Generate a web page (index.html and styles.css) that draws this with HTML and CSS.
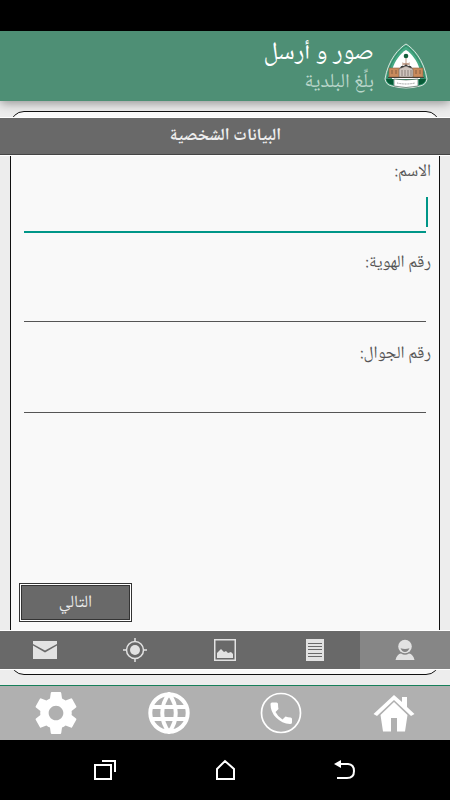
FILE: index.html
```
<!DOCTYPE html>
<html lang="ar" dir="rtl">
<head>
    <meta charset="utf-8">
    <meta name="viewport" content="width=device-width, initial-scale=1">
    <title>صور و أرسل</title>
    <link rel="stylesheet" href="styles.css">
</head>
<body>
    <div class="statusbar"></div>

    <header class="header">
        <svg class="logo" viewBox="0 0 44 46">
            <path d="M22 1C29 5 40 17 43 36Q42 42 36 43Q22 47 8 43Q2 42 1 36C4 17 15 5 22 1Z" fill="#45a883" stroke="#dce5df" stroke-width="1"/>
            <path d="M22 3C28 7 38 17 41 36H3C6 17 16 7 22 3Z" fill="none" stroke="#286b50" stroke-width="0.6"/>
            <path d="M22 7C27 10 33 17 36 27V36H8V27C11 17 17 10 22 7Z" fill="#fff"/>
            <path d="M2 36L9 36V42Q3 41 2 36ZM42 36L35 36V42Q41 41 42 36Z" fill="#075a36"/>
            <path d="M22 14V22M18 22L26 20M18 20L26 22" stroke="#a27157" stroke-width="0.7"/>
            <circle cx="22" cy="13" r="2.3" fill="#13603b"/>
            <path d="M16 25Q17 22 20 23Q22 20 24 23Q27 22 28 25Z" fill="#333"/>
            <path d="M5 25H16V34H5ZM28 25H39V34H28Z" fill="#c98a5c" stroke="#8a6040" stroke-width="0.6"/>
            <path d="M15 26L22 23L29 26V34H15Z" fill="#cfc4be" stroke="#6a615c" stroke-width="0.6"/>
            <path d="M18 27V33M21 27V33M24 27V33M27 27V33" stroke="#6b625d" stroke-width="0.7"/>
            <path d="M8 27V31M12 27V31M32 27V31M36 27V31" stroke="#7d583c" stroke-width="0.9"/>
            <path d="M4 34H40V35H4Z" fill="#493f37"/>
            <path d="M10 36Q22 38 34 36V43Q22 46 10 43Z" fill="#fff" stroke="#405047" stroke-width="0.6"/>
            <path d="M13 40Q22 42 31 40" fill="none" stroke="#777" stroke-width="0.8" stroke-dasharray="1 0.6"/>
        </svg>
        <div class="titles">
            <h1 class="title">صور و أرسل</h1>
            <p class="subtitle">بلِّغ البلدية</p>
        </div>
    </header>

    <main class="main">
        <form class="panel">
            <h2 class="bar">البيانات الشخصية</h2>

            <div class="fields">
                <div class="field">
                    <label for="name">الاسم:</label>
                    <div class="row active">
                        <span class="caret"></span>
                        <input type="text" id="name">
                    </div>
                </div>
                <div class="field">
                    <label for="idnum">رقم الهوية:</label>
                    <div class="row"><input type="text" id="idnum"></div>
                </div>
                <div class="field">
                    <label for="mobile">رقم الجوال:</label>
                    <div class="row"><input type="tel" id="mobile"></div>
                </div>
                <button type="button" class="next">التالي</button>
            </div>

            <div class="tabs">
                <button type="button" class="tab selected" aria-label="البيانات">
                    <svg viewBox="0 0 24 24">
                        <circle cx="12" cy="8.5" r="6.8"/>
                        <path d="M2.500 22Q4 16 8 15.500Q12 18 16 15.500Q20 16 21.500 22Z"/>
                        <path class="cut" d="M7.500 10.300Q12 11.500 16.500 10.300Q15 14 12 14Q9 14 7.500 10.300Z"/>
                    </svg>
                </button>
                <button type="button" class="tab" aria-label="التفاصيل">
                    <svg viewBox="0 0 24 24">
                        <path d="M3 1H21V23H3Z"/>
                        <path class="cut" d="M5 5H19V6H5ZM5 8H19V9H5ZM5 11H19V12H5ZM5 15H19V16H5ZM5 18H19V19H5Z"/>
                    </svg>
                </button>
                <button type="button" class="tab" aria-label="الصورة">
                    <svg viewBox="0 0 24 24">
                        <path fill-rule="evenodd" d="M1 1H23V23H1ZM2.500 2.500V21.500H21.500V2.500Z"/>
                        <path d="M4 20V15L8 11L11 14L13 13L15 15L18 14L20 16V20Z"/>
                    </svg>
                </button>
                <button type="button" class="tab" aria-label="الموقع">
                    <svg viewBox="0 0 24 24">
                        <circle cx="12" cy="12" r="5"/>
                        <circle class="line" cx="12" cy="12" r="8.5"/>
                        <path class="line" d="M12 0V4M12 20V24M0 12H4M20 12H24"/>
                    </svg>
                </button>
                <button type="button" class="tab" aria-label="إرسال">
                    <svg viewBox="0 0 24 24">
                        <path d="M0 3H24V6L12 12.500L0 6Z"/>
                        <path d="M0 7.500L12 14.500L24 7.500V21H0Z"/>
                    </svg>
                </button>
            </div>
        </form>
    </main>

    <footer class="menu">
        <a href="#home" aria-label="الرئيسية">
            <svg viewBox="0 0 42 42">
                <path d="M21 3L29 10V5H34V15L41.500 22L38 24L21 8L4 24L.5 22Z"/>
                <path d="M21 10L34.500 23L32 39.500H24V26H18V39.500H10L7.500 23Z"/>
            </svg>
        </a>
        <a href="#call" aria-label="اتصال">
            <svg viewBox="0 0 42 42">
                <circle cx="21" cy="21" r="19.5" fill="none" stroke="#fff" stroke-width="1.7"/>
                <path d="M10.500 12Q10.500 10.500 12 10.500H16.500Q18 10.500 18 12Q18 15 18.500 17L15.500 20Q18 25 22.500 27.500L25.500 24.500Q28 25.500 30.500 25.500Q32 25.500 32 27V30.500Q32 32 30 32Q22 31.500 16 25.500Q10.500 20 10.500 12Z"/>
            </svg>
        </a>
        <a href="#web" aria-label="الموقع الإلكتروني">
            <svg viewBox="0 0 42 42">
                <g fill="none" stroke="#fff" stroke-width="4">
                    <circle cx="21" cy="21" r="18.7"/>
                    <path d="M21 2C12 13 12 29 21 40C30 29 30 13 21 2ZM4 15H38M4 27H38"/>
                </g>
            </svg>
        </a>
        <a href="#settings" aria-label="الإعدادات">
            <svg viewBox="2 2 20 20">
                <path d="M19.430 12.980c.04-.32.07-.64.07-.98s-.03-.66-.07-.98l2.110-1.650c.19-.15.24-.42.12-.64l-2-3.460c-.12-.22-.39-.3-.61-.22l-2.490 1c-.52-.4-1.080-.73-1.690-.98l-.38-2.650C14.460 2.180 14.250 2 14 2h-4c-.25 0-.46.18-.49.42l-.38 2.650c-.61.25-1.170.59-1.690.98l-2.490-1c-.23-.09-.49 0-.61.22l-2 3.460c-.13.22-.07.49.12.64l2.110 1.650c-.04.32-.07.65-.07.98s.03.66.07.98l-2.110 1.650c-.19.15-.24.42-.12.64l2 3.460c.12.22.39.3.61.22l2.490-1c.52.4 1.080.73 1.690.98l.38 2.650c.03.24.24.42.49.42h4c.25 0 .46-.18.49-.42l.38-2.650c.61-.25 1.170-.59 1.690-.98l2.490 1c.23.09.49 0 .61-.22l2-3.460c.12-.22.07-.49-.12-.64l-2.110-1.650zM12 15.500c-1.930 0-3.500-1.570-3.500-3.500s1.570-3.500 3.500-3.500 3.500 1.570 3.500 3.500-1.570 3.500-3.500 3.500z"/>
            </svg>
        </a>
    </footer>

    <nav class="navbar">
        <button type="button" aria-label="رجوع">
            <svg viewBox="0 0 24 24">
                <path d="M5 6H15Q21 6.500 21 13Q21 20 14 20H4"/>
                <path class="solid" d="M1 6L8 2V10Z"/>
            </svg>
        </button>
        <button type="button" aria-label="الشاشة الرئيسية">
            <svg viewBox="0 0 24 24"><path d="M4 11L12 3L21 11V21H4Z"/></svg>
        </button>
        <button type="button" aria-label="التطبيقات الأخيرة">
            <svg viewBox="0 0 24 24"><path d="M2 7H18V21H2ZM9 3H22V14"/></svg>
        </button>
    </nav>
</body>
</html>
```
FILE: styles.css
```
* {
    box-sizing: border-box;
}
body {
    margin: 0;
    min-height: 100vh;
    display: flex;
    flex-direction: column;
    background-color: #ededed;
    color: #555;
    font-family: "Noto Naskh Arabic UI", "Noto Naskh Arabic", "Noto Sans", sans-serif;
}
h1, h2, p {
    margin: 0;
    font-weight: normal;
}
button {
    margin: 0;
    padding: 0;
    border: none;
    background: none;
    font-family: inherit;
    cursor: pointer;
}
svg {
    display: block;
}
.statusbar {
    height: 31px;
    background-color: #000;
}
.header {
    height: 70px;
    padding: 0 22px;
    display: flex;
    align-items: center;
    gap: 10px;
    background-color: #4e8f75;
    box-shadow: 0 2px 10px rgba(0, 0, 0, 0.4);
}
.logo {
    width: 44px;
    height: 46px;
}
.title {
    font-size: 25px;
    line-height: 34px;
    color: #fff;
}
.subtitle {
    font-size: 20px;
    line-height: 28px;
    color: #b9d6ca;
}
.main {
    flex: 1;
    display: flex;
    padding: 10px;
}
.panel {
    flex: 1;
    min-width: 0;
    display: flex;
    flex-direction: column;
    padding: 6px 0 5px;
    border: 1px solid #111;
    border-radius: 14px;
    background-color: #f9f9f9;
}
/* both bars run past the panel to the window edges */
.bar, .tabs {
    margin: 0 -11px;
    background-color: #696969;
    box-shadow: 0 1px #fff, 0 -1px #fff;
}
.bar {
    border-bottom: 1px solid #444;
    font-size: 17px;
    font-weight: bold;
    line-height: 36px;
    text-align: center;
    color: #eee;
}
.fields {
    flex: 1;
    display: flex;
    flex-direction: column;
    gap: 15px;
    padding: 2px 8px 9px;
}
.field label {
    display: block;
    font-size: 17px;
    line-height: 30px;
}
.row {
    height: 46px;
    display: flex;
    align-items: flex-start;
    padding: 0 5px;
}
.row input {
    flex: 1;
    min-width: 0;
    height: 44px;
    padding: 0;
    border: none;
    border-bottom: 1px solid #555;
    background: none;
    outline: none;
    font-family: inherit;
    font-size: 17px;
}
.row.active {
    padding: 0 3px 0 5px;
}
.active input {
    height: 46px;
    border-bottom: 2px solid #009688;
}
.caret {
    width: 2px;
    height: 30px;
    margin-top: 10px;
    background-color: #009688;
}
.next {
    align-self: flex-end;
    width: 113px;
    height: 39px;
    margin-top: auto;
    border: 1px solid #333;
    background-color: #696969;
    box-shadow: inset 0 0 0 1px #fff, inset 0 0 0 2px #333;
    font-size: 17px;
    color: #eee;
}
.tabs {
    display: flex;
}
.tab {
    flex: 1;
    height: 38px;
    display: flex;
    align-items: center;
    justify-content: center;
    color: #696969;
}
.tab.selected {
    background-color: #868686;
    color: #868686;
}
.tab svg {
    width: 24px;
    height: 24px;
    fill: #e2e2e2;
}
.tab .cut {
    fill: currentColor;
}
.tab .line {
    fill: none;
    stroke: #e2e2e2;
    stroke-width: 1.5;
}
.menu {
    display: flex;
    height: 55px;
    border-top: 1px solid #16805a;
    background-color: #b0b0b0;
}
.menu a {
    flex: 1;
    display: flex;
    align-items: center;
    justify-content: center;
}
.menu svg {
    width: 42px;
    height: 42px;
    fill: #fff;
}
.navbar {
    height: 60px;
    display: flex;
    justify-content: center;
    align-items: center;
    gap: 96px;
    background-color: #000;
}
.navbar svg {
    width: 24px;
    height: 24px;
    fill: none;
    stroke: #fff;
    stroke-width: 2;
}
.navbar .solid {
    fill: #fff;
    stroke: none;
}
```
